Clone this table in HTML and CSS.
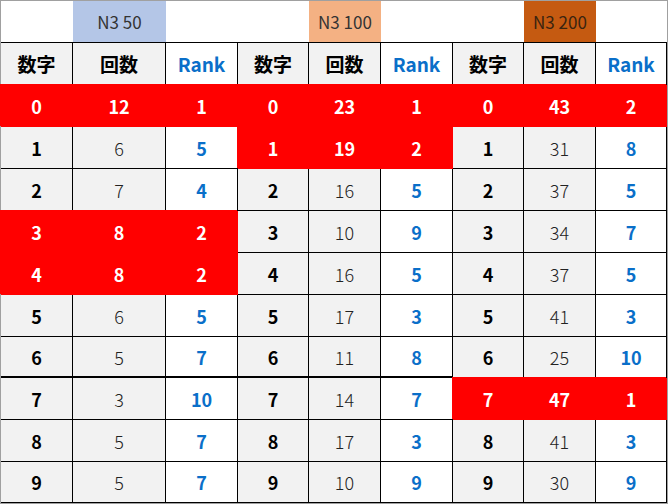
FILE: index.html
```html
<!DOCTYPE html>
<html lang="ja">
<head>
<meta charset="utf-8">
<title>N3</title>
<link rel="stylesheet" href="styles.css">
</head>
<body>
<div class="sheet">
  <div class="lb"></div><div class="lb blue">N3 50</div><div class="lb"></div>
  <div class="lb"></div><div class="lb peach">N3 100</div><div class="lb"></div>
  <div class="lb"></div><div class="lb brown">N3 200</div><div class="lb"></div>

  <div class="cell g b hd">数字</div><div class="cell g b hd">回数</div><div class="cell rk hd">Rank</div>
  <div class="cell g b hd">数字</div><div class="cell g b hd">回数</div><div class="cell rk hd">Rank</div>
  <div class="cell g b hd">数字</div><div class="cell g b hd">回数</div><div class="cell rk hd">Rank</div>

  <div class="cell hot">0</div><div class="cell hot">12</div><div class="cell hot">1</div>
  <div class="cell hot">0</div><div class="cell hot">23</div><div class="cell hot">1</div>
  <div class="cell hot">0</div><div class="cell hot">43</div><div class="cell hot">2</div>

  <div class="cell g b">1</div><div class="cell g n">6</div><div class="cell rk">5</div>
  <div class="cell hot">1</div><div class="cell hot">19</div><div class="cell hot">2</div>
  <div class="cell g b">1</div><div class="cell g n">31</div><div class="cell rk">8</div>

  <div class="cell g b">2</div><div class="cell g n">7</div><div class="cell rk">4</div>
  <div class="cell g b">2</div><div class="cell g n">16</div><div class="cell rk">5</div>
  <div class="cell g b">2</div><div class="cell g n">37</div><div class="cell rk">5</div>

  <div class="cell hot">3</div><div class="cell hot">8</div><div class="cell hot">2</div>
  <div class="cell g b">3</div><div class="cell g n">10</div><div class="cell rk">9</div>
  <div class="cell g b">3</div><div class="cell g n">34</div><div class="cell rk">7</div>

  <div class="cell hot">4</div><div class="cell hot">8</div><div class="cell hot">2</div>
  <div class="cell g b">4</div><div class="cell g n">16</div><div class="cell rk">5</div>
  <div class="cell g b">4</div><div class="cell g n">37</div><div class="cell rk">5</div>

  <div class="cell g b">5</div><div class="cell g n">6</div><div class="cell rk">5</div>
  <div class="cell g b">5</div><div class="cell g n">17</div><div class="cell rk">3</div>
  <div class="cell g b">5</div><div class="cell g n">41</div><div class="cell rk">3</div>

  <div class="cell g b thick">6</div><div class="cell g n thick">5</div><div class="cell rk thick">7</div>
  <div class="cell g b thick">6</div><div class="cell g n thick">11</div><div class="cell rk thick">8</div>
  <div class="cell g b">6</div><div class="cell g n">25</div><div class="cell rk">10</div>

  <div class="cell g b">7</div><div class="cell g n">3</div><div class="cell rk">10</div>
  <div class="cell g b">7</div><div class="cell g n">14</div><div class="cell rk">7</div>
  <div class="cell hot">7</div><div class="cell hot">47</div><div class="cell hot">1</div>

  <div class="cell g b">8</div><div class="cell g n">5</div><div class="cell rk">7</div>
  <div class="cell g b">8</div><div class="cell g n">17</div><div class="cell rk">3</div>
  <div class="cell g b">8</div><div class="cell g n">41</div><div class="cell rk">3</div>

  <div class="cell g b">9</div><div class="cell g n">5</div><div class="cell rk">7</div>
  <div class="cell g b">9</div><div class="cell g n">10</div><div class="cell rk">9</div>
  <div class="cell g b">9</div><div class="cell g n">30</div><div class="cell rk">9</div>
</div>
</body>
</html>
```

FILE: styles.css
```css
* { box-sizing: border-box; }
html, body { margin: 0; padding: 0; background: #fff; }

.sheet {
  width: 668px;
  height: 504px;
  border: 1px solid #a0a0a0;
  display: grid;
  grid-template-columns: 72px 93px 72px 71px 72px 72px 71px 72px 71px;
  grid-template-rows: 42px 42px 42px 42px 42px 42px 42px 42px 41px 42px 42px 41px;
  font-family: "Noto Sans CJK JP", "Noto Sans", sans-serif;
}

.lb {
  border-bottom: 1px solid #000;
  display: flex;
  align-items: center;
  justify-content: center;
  font-size: 17px;
  color: #333;
  font-weight: 400;
}
.blue { background: #b4c6e7; }
.peach { background: #f4b183; }
.brown { background: #c55a11; color: #3a2410; }

.cell {
  border-right: 1px solid #000;
  border-bottom: 1px solid #000;
  display: flex;
  align-items: center;
  justify-content: center;
  font-size: 18px;
  line-height: 1;
}
.hd { font-size: 19px; }
.g { background: #f2f2f2; }
.b { font-weight: 700; color: #000; }
.n { font-weight: 300; color: #222; }
.rk { background: #fff; color: #0a6fc9; font-weight: 700; }
.thick { border-bottom-width: 2px; }

.hot {
  background: #ff0000;
  border-color: #ff0000;
  box-shadow: -1px -1px 0 #ff0000;
  color: #fff;
  font-weight: 700;
}
```
